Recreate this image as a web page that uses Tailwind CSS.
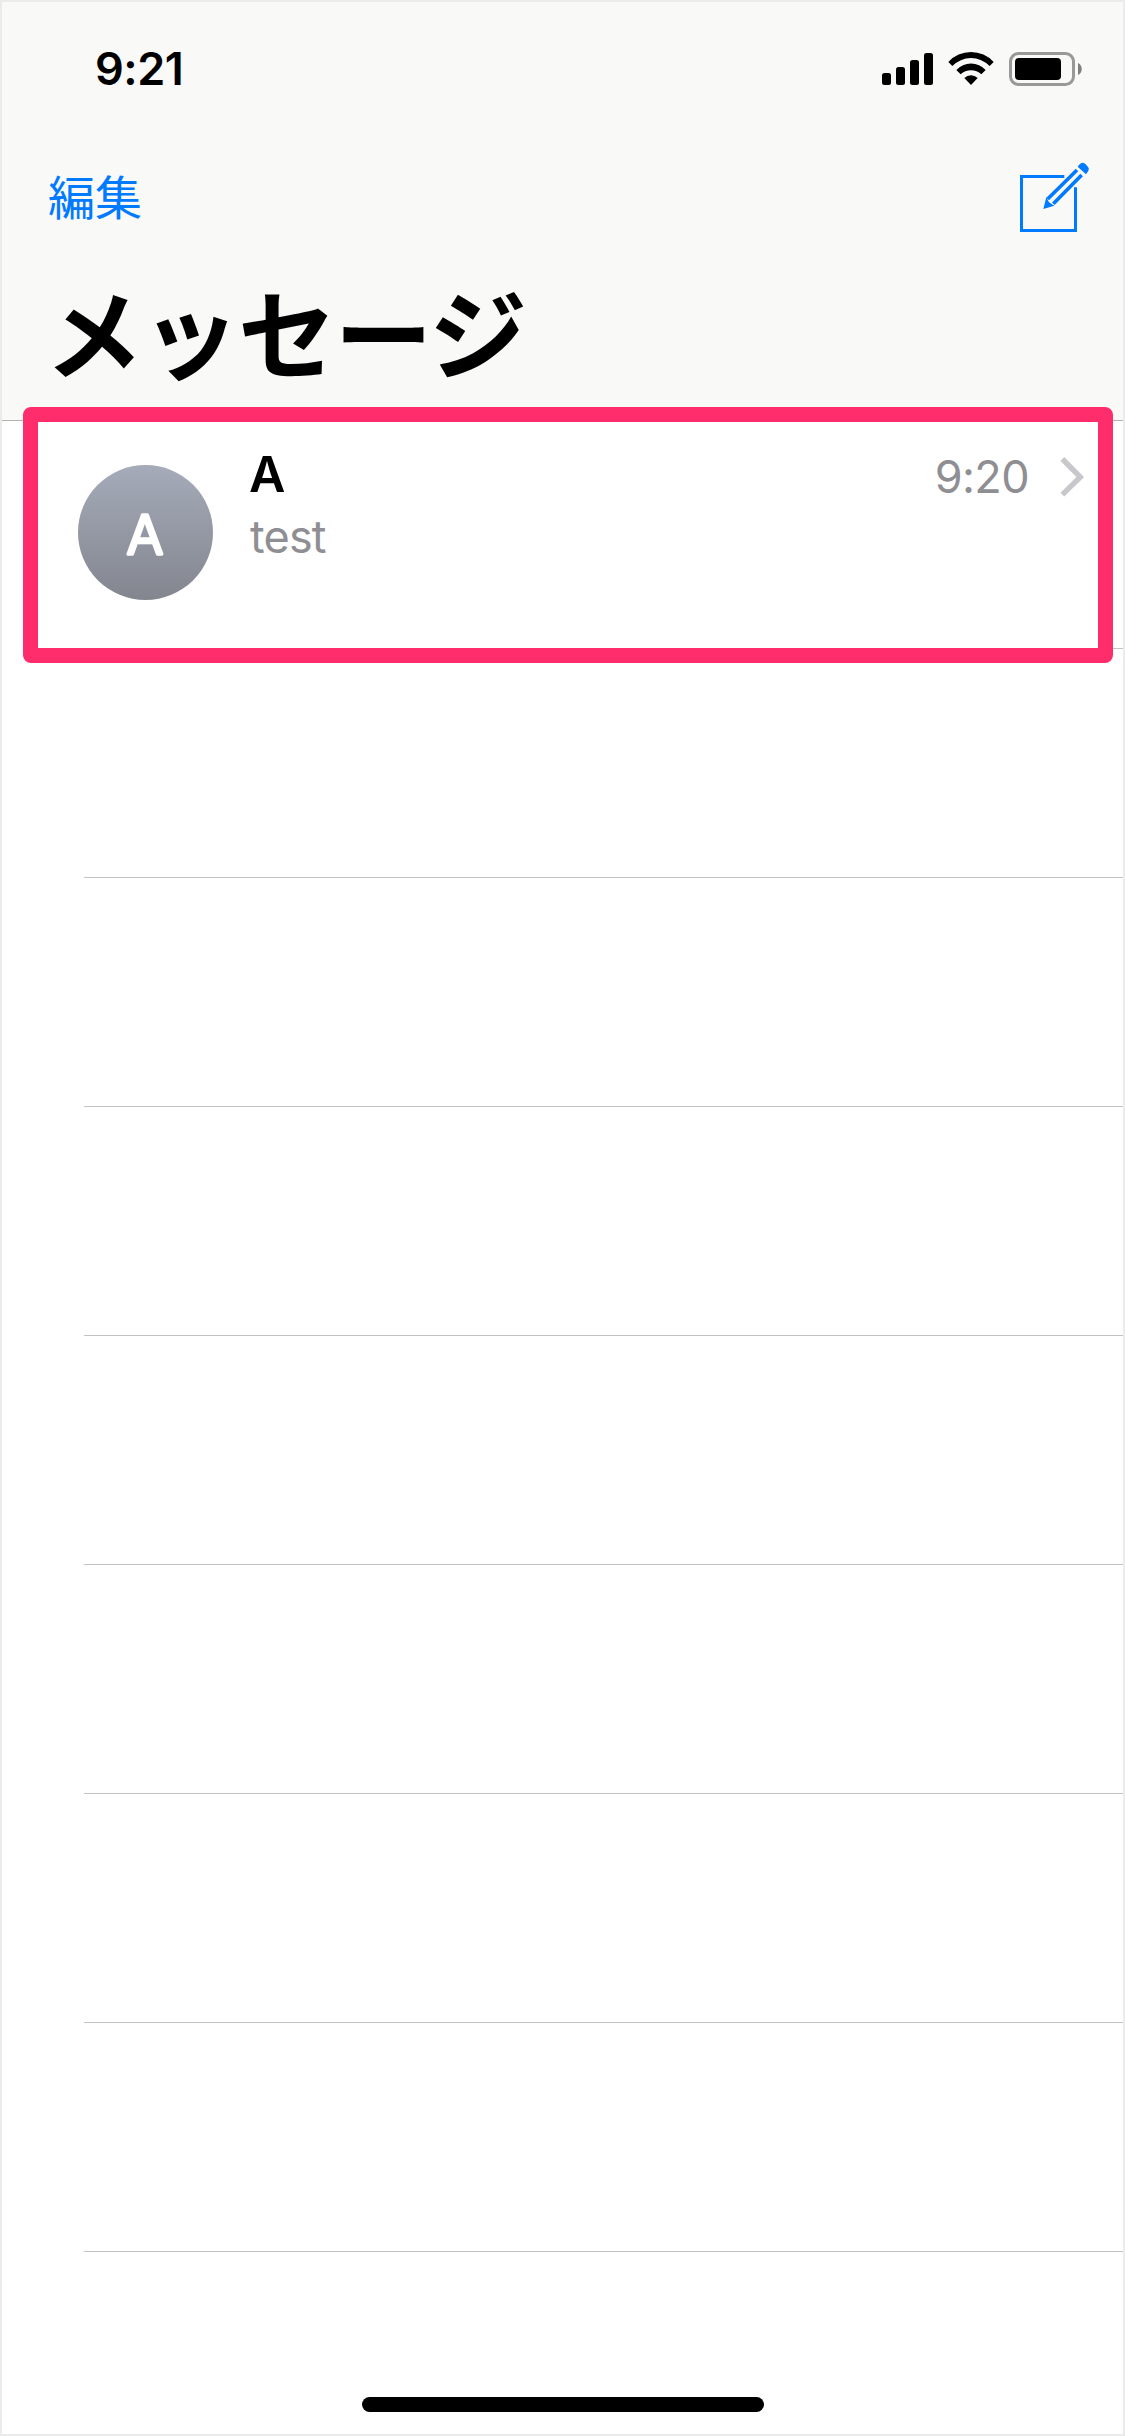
<!DOCTYPE html>
<html lang="ja">
<head>
<meta charset="utf-8">
<title>メッセージ</title>
<script src="https://cdn.jsdelivr.net/npm/@tailwindcss/browser@4"></script>
</head>
<body class="bg-white">
<div class="relative flex h-[2436px] w-[1125px] flex-col overflow-hidden border-2 border-[#ebebeb] bg-white font-[Inter,'Noto_Sans_CJK_JP',sans-serif]">
  <header class="flex h-[419px] shrink-0 flex-col border-b border-[#b2b2b2] bg-[#f9f9f8]">
    <div class="flex h-[134px] shrink-0 items-start justify-between pt-[49px] pl-[93px] pr-[41px]">
      <span class="mt-[-9px] text-[45px] leading-[54px] font-semibold tracking-[-0.5px]">9:21</span>
      <div class="flex">
        <svg class="mt-[2px] h-[32px] w-[51px]" viewBox="0 0 51 32"><rect y="20" width="9" height="12" rx="2.5"/><rect x="14" y="14" width="9" height="18" rx="2.5"/><rect x="28" y="7" width="9" height="25" rx="2.5"/><rect x="42" width="9" height="32" rx="2.5"/></svg>
        <svg class="ml-[15px] h-[35px] w-[46px]" viewBox="264 63 138 105"><path d="M265 96A92 92 0 0 1 401 96L389 108A78 78 0 0 0 277 108ZM289 120A60 60 0 0 1 377 120L364 133A45 45 0 0 0 302 133ZM313 144A29 29 0 0 1 353 144L333 165Z"/></svg>
        <svg class="ml-[15px] mt-px h-[34px] w-[73px]" viewBox="0 0 73 34"><rect x="1.5" y="1.5" width="63" height="31" rx="8" fill="none" stroke="#999" stroke-width="3"/><rect x="6" y="6" width="46" height="22" rx="4"/><path d="M69 11C74 13 74 21 69 23Z" fill="#808080"/></svg>
      </div>
    </div>
    <div class="flex h-[122px] shrink-0 items-start justify-between pl-[46px] pr-[33px]">
      <span class="mt-[24px] font-['Noto_Sans_CJK_JP',sans-serif] text-[47px] leading-[70px] font-normal text-[#007aff]">編集</span>
      <svg class="mt-[26px] h-[70px] w-[70px]" viewBox="480 396 210 210" fill="none" stroke="#007aff" stroke-width="9"><path d="M613 439.500H484.500V601.500H646.500V472"/><path d="M651 420L563 507M665 435L580 521" stroke-width="11"/><path d="M559 501L550 537L583 527L567 517Z" fill="#007aff" stroke="none"/><path d="M653 410Q666 391 677 403L684 411Q691 419 678 433Z" fill="#007aff" stroke="none"/></svg>
    </div>
    <h1 class="-mt-[4px] pl-[43px] font-['Noto_Sans_CJK_JP',sans-serif] text-[98px] leading-[150px] font-bold tracking-[-1.500px] whitespace-nowrap">メッセージ</h1>
  </header>
  <main class="flex flex-col">
    <div class="ml-[82px] flex h-[228px] items-start border-b border-[#c3c3c5]">
      <svg class="-ml-[6px] mt-[44px] h-[135px] w-[135px] shrink-0 rounded-full bg-linear-to-b from-[#a5abb9] to-[#83868f]" viewBox="0 0 135 135"><text x="67" y="88.500" text-anchor="middle" font-size="54" font-weight="300" fill="#fff" stroke="#fff" stroke-width="3.600" stroke-linejoin="round">A</text></svg>
      <div class="ml-[37px] flex flex-1 flex-col pt-[21px]">
        <span class="-ml-px text-[50px] leading-[64px] font-semibold">A</span>
        <span class="mt-px text-[45px] leading-[60px] tracking-[-0.8px] text-[#8e8e93]">test</span>
      </div>
      <span class="mt-[28px] text-[45px] leading-[56px] tracking-[-0.6px] text-[#8e8e93]">9:20</span>
      <svg class="ml-[31px] mr-[39px] mt-[35px] h-[41px] w-[24px]" viewBox="540 198 72 123"><path d="M547 207L601 261L547 314" fill="none" stroke="#c7c7cc" stroke-width="16"/></svg>
    </div>
    <div class="ml-[82px] h-[229px] border-b border-[#c3c3c5]"></div>
    <div class="ml-[82px] h-[229px] border-b border-[#c3c3c5]"></div>
    <div class="ml-[82px] h-[229px] border-b border-[#c3c3c5]"></div>
    <div class="ml-[82px] h-[229px] border-b border-[#c3c3c5]"></div>
    <div class="ml-[82px] h-[229px] border-b border-[#c3c3c5]"></div>
    <div class="ml-[82px] h-[229px] border-b border-[#c3c3c5]"></div>
    <div class="ml-[82px] h-[229px] border-b border-[#c3c3c5]"></div>
  </main>
  <div class="mx-auto mt-[145px] h-[15px] w-[402px] shrink-0 rounded-full bg-black"></div>
  <div class="absolute top-[405px] left-[21px] h-[256px] w-[1090px] rounded-[8px] border-[15px] border-[#ff2d6c]"></div>
</div>
</body>
</html>
